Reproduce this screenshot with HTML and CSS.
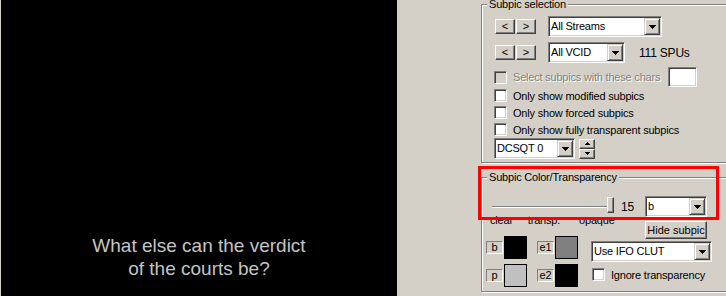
FILE: index.html
```html
<!DOCTYPE html>
<html>
<head>
    <title>Subpic preview</title>
    <link rel="stylesheet" href="styles.css">
</head>
<body>
    <div class="app">
        <div class="video">
            <div class="subtitle">What else can the verdict<br>of the courts be?</div>
        </div>

        <div class="panel">
            <fieldset class="group group-selection">
                <legend>Subpic selection</legend>
                <div class="group-body">
                    <div class="row row-nav">
                        <div class="nav"><button class="btn nav-btn">&lt;</button><button class="btn nav-btn">&gt;</button></div>
                        <div class="combo combo-stream">
                            <span class="combo-text">All Streams</span>
                            <span class="combo-btn"><svg width="7" height="4" viewBox="0 0 7 4"><path d="M0 0h7v1H0zM1 1h5v1H1zM2 2h3v1H2zM3 3h1v1H3z"/></svg></span>
                        </div>
                    </div>
                    <div class="row row-nav row-vcid">
                        <div class="nav"><button class="btn nav-btn">&lt;</button><button class="btn nav-btn">&gt;</button></div>
                        <div class="combo combo-vcid">
                            <span class="combo-text">All VCID</span>
                            <span class="combo-btn"><svg width="7" height="4" viewBox="0 0 7 4"><path d="M0 0h7v1H0zM1 1h5v1H1zM2 2h3v1H2zM3 3h1v1H3z"/></svg></span>
                        </div>
                        <span class="spu-count">111 SPUs</span>
                    </div>
                    <div class="row row-chars">
                        <span class="check disabled"></span>
                        <span class="check-label disabled-text">Select subpics with these chars</span>
                        <span class="edit edit-chars"></span>
                    </div>
                    <div class="row row-check">
                        <span class="check"></span>
                        <span class="check-label">Only show modified subpics</span>
                    </div>
                    <div class="row row-check">
                        <span class="check"></span>
                        <span class="check-label">Only show forced subpics</span>
                    </div>
                    <div class="row row-check">
                        <span class="check"></span>
                        <span class="check-label">Only show fully transparent subpics</span>
                    </div>
                    <div class="row row-dcsqt">
                        <div class="combo combo-dcsqt">
                            <span class="combo-text">DCSQT 0</span>
                            <span class="combo-btn"><svg width="7" height="4" viewBox="0 0 7 4"><path d="M0 0h7v1H0zM1 1h5v1H1zM2 2h3v1H2zM3 3h1v1H3z"/></svg></span>
                        </div>
                        <div class="spin">
                            <span class="btn spin-btn"><svg width="5" height="3" viewBox="0 0 5 3"><path d="M2 0h1v1H2zM1 1h3v1H1zM0 2h5v1H0z"/></svg></span>
                            <span class="btn spin-btn"><svg width="5" height="3" viewBox="0 0 5 3"><path d="M0 0h5v1H0zM1 1h3v1H1zM2 2h1v1H2z"/></svg></span>
                        </div>
                    </div>
                </div>
            </fieldset>

            <fieldset class="group group-color">
                <legend>Subpic Color/Transparency</legend>
                <div class="group-body">
                    <div class="row row-slider">
                        <div class="slider">
                            <span class="slider-track"></span>
                            <span class="slider-thumb"></span>
                        </div>
                        <span class="slider-value">15</span>
                        <div class="combo combo-color">
                            <span class="combo-text">b</span>
                            <span class="combo-btn"><svg width="7" height="4" viewBox="0 0 7 4"><path d="M0 0h7v1H0zM1 1h5v1H1zM2 2h3v1H2zM3 3h1v1H3z"/></svg></span>
                        </div>
                    </div>
                    <div class="row row-palette">
                        <div class="palette-col">
                            <div class="scale"><span class="scale-clear">clear</span><span class="scale-transp">transp.</span><span class="scale-opaque">opaque</span></div>
                            <div class="swatches">
                                <div class="swatch-item"><span class="swatch-label">b</span><span class="swatch" style="background: #000"></span></div>
                                <div class="swatch-item"><span class="swatch-label">e1</span><span class="swatch" style="background: #808080"></span></div>
                                <div class="swatch-item"><span class="swatch-label">p</span><span class="swatch" style="background: #c0c0c0"></span></div>
                                <div class="swatch-item"><span class="swatch-label">e2</span><span class="swatch" style="background: #000"></span></div>
                            </div>
                        </div>
                        <div class="options-col">
                            <button class="btn hide-btn">Hide subpic</button>
                            <div class="combo combo-clut">
                                <span class="combo-text">Use IFO CLUT</span>
                                <span class="combo-btn"><svg width="7" height="4" viewBox="0 0 7 4"><path d="M0 0h7v1H0zM1 1h5v1H1zM2 2h3v1H2zM3 3h1v1H3z"/></svg></span>
                            </div>
                            <div class="row row-ignore">
                                <span class="check"></span>
                                <span class="check-label">Ignore transparency</span>
                            </div>
                        </div>
                    </div>
                </div>
            </fieldset>
        </div>

        <div class="highlight"></div>
    </div>
</body>
</html>
```

FILE: styles.css
```css
body { margin: 0; background: #d4d0c8; font-family: "Liberation Sans", Arial, sans-serif; font-size: 11px; letter-spacing: -0.2px; color: #000; overflow: hidden; }
.app { position: relative; display: flex; width: 726px; height: 296px; overflow: hidden; }

/* video preview */
.video { flex: none; width: 396px; height: 296px; margin-left: 1px; background: #000; padding-top: 234px; box-sizing: border-box; }
.subtitle { font-size: 19px; line-height: 23px; color: #c4c4c4; text-align: center; letter-spacing: 0; }

/* right side panel */
.panel { flex: none; margin-left: 84px; width: 260px; }
.group { margin: 0; padding: 0; width: 260px; box-sizing: border-box; min-width: 0; border: 1px solid #808080; box-shadow: inset 1px 1px #fff, 1px 1px #fff; }
.group legend { margin-left: 5px; padding: 0 2px; line-height: 13px; background: #d4d0c8; }
.group-selection { margin-top: -2px; }
.group-selection .group-body { padding: 5px 0 3px 12px; }
.group-color { margin-top: 8px; }
.group-color .group-body { padding: 12px 0 4px 0; }

.row { display: flex; align-items: center; }

/* classic 3d controls */
.btn { display: flex; align-items: center; justify-content: center; box-sizing: border-box; padding: 0; margin: 0; background: #d4d0c8; font: inherit; color: #000; border: 1px solid; border-color: #fff #404040 #404040 #fff; box-shadow: inset -1px -1px #808080; }
.combo { display: flex; box-sizing: border-box; height: 21px; padding: 1px; background: #fff; border: 1px solid; border-color: #808080 #fff #fff #808080; box-shadow: inset 1px 1px #404040, inset -1px -1px #d4d0c8; }
.combo-text { flex: 1; padding-left: 1px; line-height: 17px; white-space: nowrap; overflow: hidden; }
.combo-btn { flex: none; display: flex; align-items: center; justify-content: center; width: 16px; height: 17px; box-sizing: border-box; background: #d4d0c8; border: 1px solid; border-color: #d4d0c8 #404040 #404040 #d4d0c8; box-shadow: inset 1px 1px #fff, inset -1px -1px #808080; }
.edit { display: block; box-sizing: border-box; background: #fff; border: 1px solid; border-color: #808080 #fff #fff #808080; box-shadow: inset 1px 1px #404040, inset -1px -1px #d4d0c8; }
.check { flex: none; display: block; width: 13px; height: 13px; box-sizing: border-box; background: #fff; border: 1px solid; border-color: #808080 #fff #fff #808080; box-shadow: inset 1px 1px #404040, inset -1px -1px #d4d0c8; }
.check.disabled { background: #d4d0c8; }
.check-label { margin-left: 6px; white-space: nowrap; }
.disabled-text { color: #808080; text-shadow: 1px 1px #fff; }

/* selection group */
.row-nav { height: 21px; }
.row-vcid { margin-top: 5px; }
.nav { display: flex; gap: 1px; margin-left: 1px; }
.nav-btn { width: 20px; height: 15px; line-height: 13px; }
.combo-stream { width: 114px; margin-left: 12px; }
.combo-vcid { width: 77px; margin-left: 12px; }
.spu-count { margin-left: 14px; font-size: 12px; }
.row-chars { height: 20px; margin-top: 4px; }
.edit-chars { width: 29px; height: 20px; margin-left: 8px; }
.row-check { height: 17px; }
.row-dcsqt { height: 21px; }
.combo-dcsqt { width: 81px; }
.spin { display: flex; flex-direction: column; margin-left: 4px; width: 16px; height: 20px; }
.spin-btn { width: 16px; height: 10px; }

/* color group */
.row-slider { height: 21px; }
.slider { position: relative; display: flex; align-items: center; width: 122px; height: 21px; margin-left: 10px; }
.slider-track { display: block; width: 120px; height: 2px; border-top: 1px solid #808080; border-bottom: 1px solid #fff; background: #404040; box-sizing: border-box; }
.slider-thumb { position: absolute; right: 0; top: 1px; width: 7px; height: 16px; box-sizing: border-box; background: #d4d0c8; border: 1px solid; border-color: #fff #404040 #404040 #fff; box-shadow: inset -1px -1px #808080; }
.slider-value { margin-left: 7px; width: 12px; font-size: 12px; }
.combo-color { width: 62px; margin-left: 12px; }

.row-palette { align-items: flex-start; }
.palette-col { width: 96px; padding-left: 4px; }
.scale { display: flex; margin: -3px 0 0 4px; line-height: 13px; white-space: nowrap; }
.scale-transp { margin-left: 15px; }
.scale-opaque { margin-left: 19px; }
.swatches { display: grid; grid-template-columns: 41px 41px; column-gap: 10px; row-gap: 5px; margin-top: 9px; }
.swatch-item { display: flex; align-items: center; gap: 1px; }
.swatch-label { width: 17px; height: 13px; box-sizing: border-box; border: 1px solid; border-color: #808080 #fff #fff #808080; display: flex; align-items: center; justify-content: center; line-height: 11px; }
.swatch { display: block; width: 23px; height: 23px; box-sizing: border-box; border: 1px solid #000; }

.options-col { margin-left: 9px; width: 122px; }
.hide-btn { width: 62px; height: 18px; margin: 4px 0 0 54px; }
.combo-clut { width: 121px; margin-top: 2px; }
.row-ignore { height: 17px; margin-top: 4px; padding-left: 1px; }

/* annotation box */
.highlight { position: absolute; left: 478px; top: 166px; width: 241px; height: 54px; box-sizing: border-box; border: 3px solid #f00; }
```
